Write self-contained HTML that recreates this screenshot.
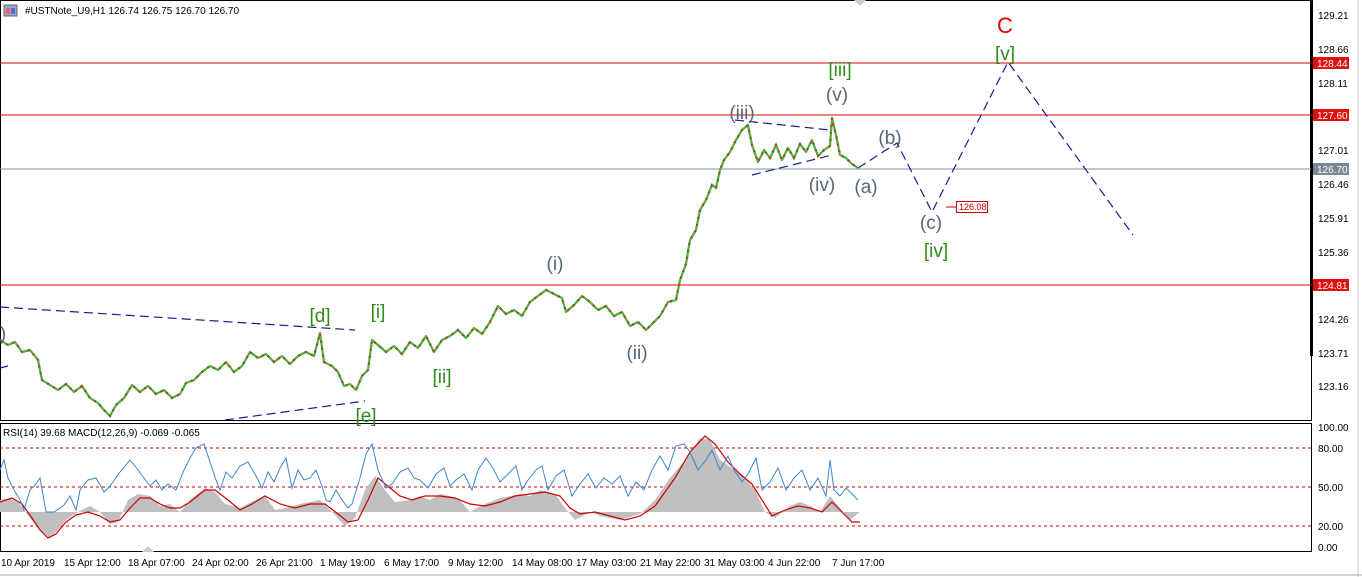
<!DOCTYPE html>
<html><head><meta charset="utf-8"><style>
body{margin:0;background:#fff;width:1362px;height:577px;overflow:hidden;font-family:"Liberation Sans",sans-serif}
svg{display:block}
.t{font-size:10px;fill:#000}
.g{font-size:19px;fill:#2e8b1a}
.p{font-size:19px;fill:#556677}
</style></head><body>
<svg width="1362" height="577" viewBox="0 0 1362 577">
<defs>
<polyline id="pr" points="0,340 8,345 15,342 22,352 30,350 38,360 42,380 50,385 58,390 66,384 74,392 82,386 90,398 98,403 104,410 110,416 116,405 124,398 132,385 140,392 148,386 156,394 164,390 172,398 180,394 186,383 194,380 202,372 210,366 218,370 226,362 234,372 242,366 250,352 258,358 266,354 274,362 282,356 290,364 298,356 306,352 314,356 320,333 324,362 332,366 338,372 344,386 350,384 356,390 362,376 368,370 372,340 378,345 386,352 394,346 402,354 410,342 418,348 426,336 434,352 442,340 450,336 458,330 466,338 474,328 482,334 490,322 498,306 506,314 514,310 522,316 530,302 538,296 546,290 554,294 562,298 566,312 574,305 582,296 590,302 598,310 606,306 614,316 622,312 630,326 638,322 646,330 654,322 660,316 668,302 676,300 680,280 686,264 690,240 696,230 700,210 706,200 712,185 716,188 720,170 724,160 730,152 736,140 742,130 748,125 752,145 758,162 764,150 770,158 776,145 782,160 788,148 794,158 800,144 806,152 812,140 818,156 824,150 830,146 832,118 836,135 840,155 846,158 852,164 858,168"/>
</defs>
<rect x="0" y="0" width="1362" height="577" fill="#fff"/>
<rect x="0.5" y="0.5" width="1311" height="420" fill="none" stroke="#000"/>
<rect x="0.5" y="423.5" width="1311" height="128" fill="none" stroke="#000"/>
<rect x="1310" y="0" width="3" height="356" fill="#000"/>
<rect x="4" y="5" width="13" height="11" fill="#9ab" stroke="#667"/>
<rect x="6" y="8" width="4" height="6" fill="#e66"/><rect x="11" y="8" width="4" height="6" fill="#66d"/>
<text x="25" y="14" class="t" font-size="11">#USTNote_U9,H1  126.74 126.75 126.70 126.70</text>
<line x1="0" y1="63" x2="1311" y2="63" stroke="#e00000"/>
<line x1="0" y1="115" x2="1311" y2="115" stroke="#e00000"/>
<line x1="0" y1="285" x2="1311" y2="285" stroke="#e00000"/>
<line x1="0" y1="169" x2="1311" y2="169" stroke="#8090a0"/>
<g class="t">
<text x="1318" y="19">129.21</text><text x="1318" y="53">128.66</text><text x="1318" y="87">128.11</text>
<text x="1318" y="154">127.01</text><text x="1318" y="188">126.46</text><text x="1318" y="222">125.91</text>
<text x="1318" y="256">125.36</text><text x="1318" y="323">124.26</text><text x="1318" y="357">123.71</text>
<text x="1318" y="390">123.16</text>
<text x="1318" y="431">100.00</text><text x="1318" y="452">80.00</text><text x="1318" y="491">50.00</text>
<text x="1318" y="530">20.00</text><text x="1318" y="551">0.00</text>
</g>
<rect x="1313" y="57" width="36" height="12" fill="#e01010"/><text x="1317" y="67" class="t" style="fill:#fff">128.44</text>
<rect x="1313" y="109" width="36" height="12" fill="#e01010"/><text x="1317" y="119" class="t" style="fill:#fff">127.60</text>
<rect x="1313" y="163" width="36" height="12" fill="#7a8896"/><text x="1317" y="173" class="t" style="fill:#fff">126.70</text>
<rect x="1313" y="279" width="36" height="12" fill="#e01010"/><text x="1317" y="289" class="t" style="fill:#fff">124.81</text>
<line x1="1358" y1="0" x2="1358" y2="577" stroke="#ccc"/>
<g stroke="#1a1a90" stroke-dasharray="9,5" fill="none" stroke-width="1.2">
<line x1="0" y1="307" x2="355" y2="330"/>
<line x1="225" y1="420" x2="365" y2="401"/>
<line x1="0" y1="368" x2="8" y2="366"/>
<line x1="735" y1="120" x2="830" y2="130"/>
<line x1="752" y1="175" x2="832" y2="155"/>
<polyline points="858,168 897,143 932,212 1008,62 1133,235"/>
</g>
<use href="#pr" fill="none" stroke="#3cb83c" stroke-width="2.2" stroke-linejoin="round"/>
<use href="#pr" fill="none" stroke="#c8321e" stroke-width="2.2" stroke-dasharray="2,5"/>
<g class="g" text-anchor="middle">
<text x="320" y="322">[d]</text><text x="378" y="318">[i]</text><text x="442" y="383">[ii]</text>
<text x="366" y="422">[e]</text><text x="840" y="76">[iii]</text><text x="936" y="257">[iv]</text><text x="1005" y="60">[v]</text>
</g>
<g class="p" text-anchor="middle">
<text x="555" y="270">(i)</text><text x="637" y="359">(ii)</text><text x="742" y="119">(iii)</text>
<text x="822" y="191">(iv)</text><text x="837" y="101">(v)</text><text x="866" y="193">(a)</text>
<text x="890" y="144">(b)</text><text x="931" y="229">(c)</text><text x="3" y="340">)</text>
</g>
<text x="1005" y="33" text-anchor="middle" font-size="22" fill="#e00000">C</text>
<line x1="946" y1="207" x2="956" y2="207" stroke="#c00"/>
<rect x="956.5" y="201.5" width="31" height="11" fill="#fff" stroke="#c00"/>
<text x="959" y="210" font-size="9" fill="#c00">126.08</text>
<text x="3" y="436" class="t">RSI(14) 39.68 MACD(12,26,9) -0.069 -0.065</text>
<g stroke="#c00" stroke-dasharray="3,3"><line x1="0" y1="448" x2="1311" y2="448"/><line x1="0" y1="487" x2="1311" y2="487"/><line x1="0" y1="526" x2="1311" y2="526"/></g>
<path fill="#c0c0c0" d="M0,512 L0,500 10,498 20,504 28,516 40,530 50,538 58,530 66,520 78,512 90,506 100,512 110,524 118,522 128,500 138,494 150,496 160,506 170,504 180,512 190,500 205,488 215,492 225,504 240,508 255,500 265,496 275,510 285,508 300,504 320,500 332,512 345,526 355,518 365,490 375,476 385,490 395,502 410,500 420,496 430,500 440,494 450,496 460,500 470,512 480,506 500,498 520,494 530,496 540,490 555,494 565,508 575,520 590,512 600,516 620,520 640,514 655,500 670,478 685,460 700,438 710,440 720,460 735,470 745,478 755,490 765,512 775,518 790,506 800,502 810,506 820,512 830,496 840,508 850,520 860,512 Z"/>
<polyline fill="none" stroke="#c00" stroke-width="1.2" points="0,502 12,498 22,504 30,515 40,530 48,538 56,534 66,522 76,515 88,512 100,516 110,522 120,520 130,508 140,498 150,498 160,504 170,508 180,508 190,502 205,490 215,490 228,500 240,510 252,504 265,496 280,504 295,508 310,504 325,504 338,514 348,522 358,520 368,500 378,478 390,488 400,496 412,500 425,496 440,496 455,498 470,504 485,506 500,502 515,496 530,494 545,492 560,496 570,508 580,514 595,512 610,516 625,520 640,516 655,506 665,492 675,478 690,452 705,436 715,444 728,462 740,474 752,484 762,500 772,516 785,510 798,506 810,508 822,512 832,502 842,512 852,522 860,522"/>
<polyline fill="none" stroke="#3a86d0" stroke-width="1" points="0,470 4,460 8,478 14,490 20,500 24,510 30,490 36,484 40,478 46,512 54,512 60,508 64,505 70,496 76,510 80,490 88,480 96,478 104,492 110,486 120,472 130,460 138,470 144,478 150,486 156,480 162,490 168,484 176,490 184,470 190,458 196,448 204,444 210,462 216,480 220,490 226,472 232,478 240,466 248,462 256,476 262,488 268,472 274,482 280,468 286,458 292,488 298,470 304,480 310,478 316,470 322,486 326,500 330,502 336,490 342,500 348,508 352,504 360,478 366,454 372,444 378,470 386,488 392,484 400,472 408,468 414,478 420,480 428,488 436,474 444,468 450,486 456,480 464,474 472,490 478,470 486,458 494,470 500,482 508,474 516,466 522,490 528,480 536,470 542,466 548,490 556,476 564,470 572,496 580,484 588,474 596,488 604,478 612,484 620,476 628,496 636,482 644,490 652,470 660,456 668,470 676,446 684,444 690,452 698,470 706,460 712,450 720,470 728,456 734,470 742,482 748,474 756,458 762,490 770,482 778,468 786,490 794,478 802,470 810,490 818,478 826,496 830,460 834,490 840,496 846,488 852,494 858,500"/>
<g class="t">
<text x="1" y="566">10 Apr 2019</text><text x="64" y="566">15 Apr 12:00</text><text x="128" y="566">18 Apr 07:00</text>
<text x="192" y="566">24 Apr 02:00</text><text x="256" y="566">26 Apr 21:00</text><text x="320" y="566">1 May 19:00</text>
<text x="384" y="566">6 May 17:00</text><text x="448" y="566">9 May 12:00</text><text x="512" y="566">14 May 08:00</text>
<text x="576" y="566">17 May 03:00</text><text x="640" y="566">21 May 22:00</text><text x="704" y="566">31 May 03:00</text>
<text x="768" y="566">4 Jun 22:00</text><text x="832" y="566">7 Jun 17:00</text>
</g>
<polygon points="142,552 148,546 154,552" fill="#ccc"/>
<polygon points="854,0 860,6 866,0" fill="#ccc"/>
<line x1="0" y1="575" x2="1362" y2="575" stroke="#aaa"/>
</svg>
</body></html>
